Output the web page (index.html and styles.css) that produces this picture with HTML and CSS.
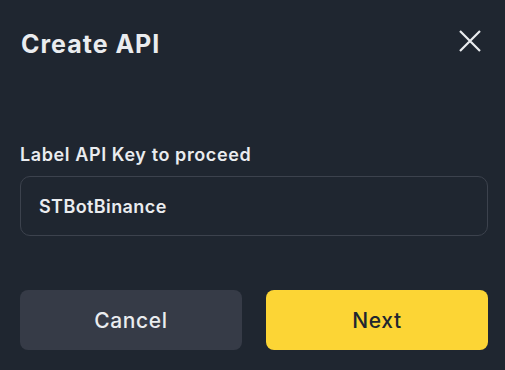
FILE: index.html
```html
<!DOCTYPE html>
<html>
<head>
<meta charset="utf-8">
<link rel="stylesheet" href="styles.css">
</head>
<body>
<div class="dialog">
  <div class="header">
    <h1 class="title">Create API</h1>
    <button class="close" aria-label="Close">
      <svg width="24" height="24" viewBox="0 0 24 24"><path d="M2 2L22 22M22 2L2 22" stroke="#eaecef" stroke-width="2.2" fill="none"/></svg>
    </button>
  </div>
  <label class="label">Label API Key to proceed</label>
  <div class="input">STBotBinance</div>
  <div class="actions">
    <button class="btn cancel">Cancel</button>
    <button class="btn next">Next</button>
  </div>
</div>
</body>
</html>
```
FILE: styles.css
```css
html, body {
  margin: 0;
  padding: 0;
  background: #1f2630;
}
body {
  width: 505px;
  height: 370px;
  font-family: Inter, "Noto Sans", sans-serif;
  color: #eaecef;
}
.dialog {
  padding: 0 17px 0 20px;
  display: flex;
  flex-direction: column;
}
.header {
  display: flex;
  justify-content: space-between;
  align-items: center;
  height: 88px;
  padding-right: 6px;
}
.title {
  margin: 0 0 0 1px;
  font-size: 25px;
  font-weight: 700;
  letter-spacing: 1px;
  color: #eaecef;
}
.close {
  background: none;
  border: 0;
  padding: 0;
  width: 24px;
  height: 24px;
  display: flex;
  margin-top: -6px;
}
.label {
  margin-top: 56px;
  font-size: 18px;
  font-weight: 600;
  letter-spacing: 0.6px;
  line-height: 22px;
}
.input {
  margin-top: 10px;
  height: 58px;
  border: 1px solid #3c424d;
  border-radius: 10px;
  display: flex;
  align-items: center;
  padding-left: 18px;
  font-size: 18px;
  font-weight: 600;
  letter-spacing: 0.4px;
}
.actions {
  margin-top: 54px;
  display: flex;
  gap: 24px;
}
.btn {
  flex: 1;
  height: 60px;
  border: 0;
  border-radius: 8px;
  font-family: Inter, "Noto Sans", sans-serif;
  font-size: 21px;
  font-weight: 500;
  letter-spacing: 0.6px;
  padding-top: 2px;
}
.cancel {
  background: #363b47;
  color: #eaecef;
}
.next {
  background: #fcd535;
  color: #202630;
}
```
